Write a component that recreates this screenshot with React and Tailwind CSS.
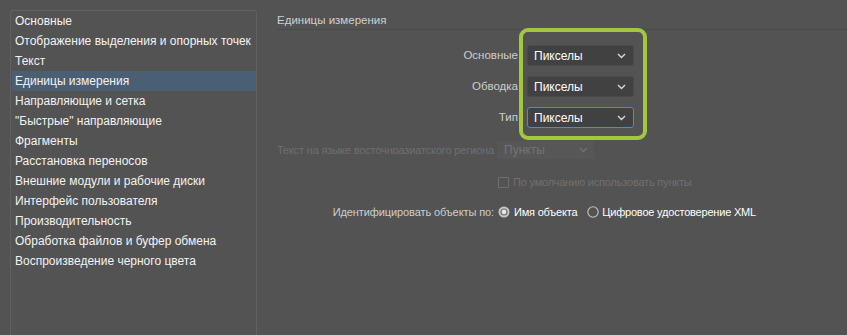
const SECTIONS = [
  'Основные',
  'Отображение выделения и опорных точек',
  'Текст',
  'Единицы измерения',
  'Направляющие и сетка',
  '"Быстрые" направляющие',
  'Фрагменты',
  'Расстановка переносов',
  'Внешние модули и рабочие диски',
  'Интерфейс пользователя',
  'Производительность',
  'Обработка файлов и буфер обмена',
  'Воспроизведение черного цвета',
];

const UNITS = [
  { label: 'Основные', value: 'Пикселы' },
  { label: 'Обводка', value: 'Пикселы' },
  { label: 'Тип', value: 'Пикселы', focused: true },
];

function Chevron({ color = '#d8d8d8' }) {
  return (
    <svg width="9" height="6" viewBox="0 0 9 6" className="shrink-0">
      <polyline points="1,1 4.5,4.5 8,1" fill="none" stroke={color} strokeWidth="1.4" />
    </svg>
  );
}

function Select({ value, focused }) {
  return (
    <div
      className={`w-[107px] h-[21px] flex items-center justify-between pl-[6px] pr-[7px] rounded-[3px] bg-[#414141] border ${
        focused ? 'border-[#3d8fe3]' : 'border-[#4a4a4a]'
      }`}
    >
      <span className="text-[12px] text-white leading-none">{value}</span>
      <Chevron />
    </div>
  );
}

function Radio({ checked }) {
  return (
    <svg width="12" height="12" viewBox="0 0 12 12" className="shrink-0">
      {checked ? (
        <>
          <circle cx="6" cy="6" r="5.5" fill="#c9c9c9" />
          <circle cx="6" cy="6" r="3.6" fill="#6a6a6a" />
          <circle cx="6" cy="6" r="2.4" fill="#e6e6e6" />
        </>
      ) : (
        <circle cx="6" cy="6" r="5.2" fill="none" stroke="#c4c4c4" strokeWidth="1.1" />
      )}
    </svg>
  );
}

export default function App() {
  const active = 'Единицы измерения';

  return (
    <div
      className="relative w-[847px] h-[335px] overflow-hidden bg-[#535353] flex"
      style={{ fontFamily: '"Liberation Sans", Arial, sans-serif' }}
    >
      {/* Section list */}
      <div className="w-[257px] shrink-0 pl-[10px] pt-[10px]">
        <div className="h-[340px] border border-[#616161] border-b-0 rounded-t-[3px] pl-px">
          {SECTIONS.map((s) => (
            <div
              key={s}
              className={`h-[20px] flex items-center pl-[3px] text-[12px] text-[#f2f2f2] whitespace-nowrap ${
                s === active ? 'bg-[#4b5f74]' : ''
              }`}
            >
              {s}
            </div>
          ))}
        </div>
      </div>

      {/* Settings */}
      <div className="flex-1 pl-[20px]">
        <div className="h-[30px] pt-[12px] border-b border-[#4a4a4a] text-[11.5px] leading-[16px] text-[#cfcfcf]">
          Единицы измерения
        </div>

        <div className="mt-[15px] flex flex-col gap-[10px]">
          {UNITS.map((u) => (
            <div key={u.label} className="flex items-center">
              <div className="w-[241px] flex justify-end whitespace-nowrap text-[11.5px] text-[#cdcdcd]">
                {u.label}
              </div>
              <div className="ml-[9px]">
                <Select value={u.value} focused={u.focused} />
              </div>
            </div>
          ))}
        </div>

        {/* Disabled */}
        <div className="mt-[13px] flex items-center">
          <div className="w-[217px] flex justify-end whitespace-nowrap text-[11px] tracking-[-0.15px] text-[#6f6f6f]">
            Текст на языке восточноазиатского региона
          </div>
          <div className="ml-[3px] w-[97px] h-[18px] flex items-center justify-between pl-[7px] pr-[6px] bg-[#575757]">
            <span className="text-[12px] text-[#747474] leading-none">Пункты</span>
            <Chevron color="#727272" />
          </div>
        </div>

        <div className="mt-[16px] h-[14px] flex items-center pl-[221px]">
          <div className="w-[11px] h-[11px] border border-[#6e6e6e] rounded-[1px]" />
          <span className="ml-[4px] text-[11px] tracking-[-0.2px] text-[#707070] whitespace-nowrap">
            По умолчанию использовать пункты
          </span>
        </div>

        <div className="mt-[15px] h-[16px] flex items-center">
          <div className="w-[217px] flex justify-end whitespace-nowrap text-[11px] tracking-[-0.1px] text-[#cdcdcd]">
            Идентифицировать объекты по:
          </div>
          <div className="ml-[4px] flex items-center">
            <Radio checked />
            <span className="ml-[4px] text-[11px] tracking-[-0.2px] text-white whitespace-nowrap">Имя объекта</span>
          </div>
          <div className="ml-[10px] flex items-center">
            <Radio />
            <span className="ml-[3px] text-[11px] tracking-[-0.2px] text-white whitespace-nowrap">
              Цифровое удостоверение XML
            </span>
          </div>
        </div>
      </div>

      {/* Highlight annotation */}
      <div className="absolute left-[519px] top-[28px] w-[128px] h-[112px] border-[4px] border-[#a3c83f] rounded-[9px] pointer-events-none" />
    </div>
  );
}
